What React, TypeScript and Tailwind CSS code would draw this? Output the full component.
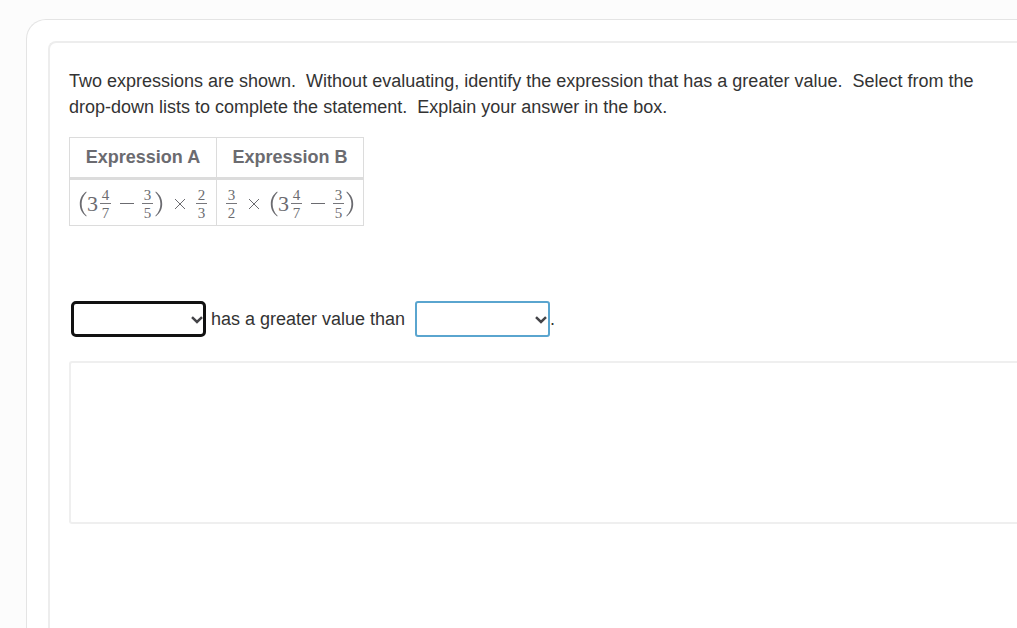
import type { ReactNode } from "react";

function Frac({ top, bottom }: { top: string; bottom: string }) {
  return (
    <span className="inline-flex w-[11px] flex-col items-center text-[15px]">
      <span className="w-full border-b border-[#77777c] pt-[3px] text-center leading-[15px]">{top}</span>
      <span className="leading-[18px]">{bottom}</span>
    </span>
  );
}

function Paren({ side }: { side: "left" | "right" }) {
  return (
    <svg
      role="img"
      aria-label={side === "left" ? "(" : ")"}
      viewBox="0 0 8 26"
      className={side === "left" ? "h-[26px] w-2" : "h-[26px] w-2 -scale-x-100"}
      fill="#6b6b70"
    >
      <path d="M7.2 0.6C2.8 4 0.8 8 0.8 13s2 9 6.4 12.4l0.4-0.6C4.2 21.400 2.600 17.500 2.600 13S4.200 4.600 7.600 1.200z" />
    </svg>
  );
}

function Minus() {
  return (
    <svg role="img" aria-label="minus" viewBox="0 0 14 14" className="mr-2 ml-[9px] size-[14px]" stroke="#6b6b70">
      <path d="M0 6.500H14" />
    </svg>
  );
}

function Times() {
  return (
    <svg role="img" aria-label="times" viewBox="0 0 12 12" className="size-3" stroke="#6b6b70" strokeWidth="1">
      <path d="M1 1L11 11M11 1L1 11" />
    </svg>
  );
}

function Difference() {
  return (
    <span className="flex items-center">
      <Paren side="left" />
      <span className="mr-[2px] text-[22px] leading-6">3</span>
      <Frac top="4" bottom="7" />
      <Minus />
      <Frac top="3" bottom="5" />
      <span className="ml-[2px] flex">
        <Paren side="right" />
      </span>
    </span>
  );
}

function Expression({ children }: { children: ReactNode }) {
  return (
    <td className="border border-[#dcdcdc] pt-[5px] pr-[9px] pb-[3px] pl-[9px]">
      <div className="flex items-center justify-between font-['Liberation_Serif',serif] text-[#6b6b70]">
        {children}
      </div>
    </td>
  );
}

function Choice({ label, active = false }: { label: string; active?: boolean }) {
  return (
    <span className="relative inline-flex">
      <select
        aria-label={label}
        defaultValue=""
        className={
          active
            ? "h-9 w-[135px] appearance-none rounded-[5px] border-[3px] border-[#111111] bg-white px-2 outline-none"
            : "h-9 w-[135px] appearance-none rounded-[3px] border-2 border-[#5aa5cf] bg-white px-2 outline-none"
        }
      >
        <option value=""></option>
        <option value="a">Expression A</option>
        <option value="b">Expression B</option>
      </select>
      <svg
        aria-hidden="true"
        viewBox="0 0 12 8"
        className="pointer-events-none absolute top-[15px] right-[3px] h-2 w-3"
        fill="none"
        stroke="#444448"
        strokeWidth="2.500"
      >
        <path d="M1 1.200L6 6L11 1.200" />
      </svg>
    </span>
  );
}

export default function App() {
  return (
    <div className="flex min-h-screen bg-[#fcfcfc] pt-[19px] pl-[26px] font-['Liberation_Sans',sans-serif] text-lg leading-[26px] text-[#333333]">
      <div className="flex grow rounded-tl-[20px] border-t border-l border-[#e4e4e4] bg-white pt-[21px] pl-[21px]">
        <main className="grow rounded-tl-lg border-t-2 border-l-2 border-[#ededed] pt-[25px] pl-[19px]">
          <p className="pr-5">
            Two expressions are shown.&nbsp; Without evaluating, identify the expression that has a greater value.&nbsp;
            Select from the drop-down lists to complete the statement.&nbsp; Explain your answer in the box.
          </p>

          <table className="mt-[17px] w-[295px] table-fixed border-collapse text-[#6b6b70]">
            <thead>
              <tr>
                <th className="h-[41px] border border-b-[3px] border-[#dcdcdc] pb-px font-bold">Expression A</th>
                <th className="h-[41px] border border-b-[3px] border-[#dcdcdc] pb-px font-bold">Expression B</th>
              </tr>
            </thead>
            <tbody>
              <tr>
                <Expression>
                  <Difference />
                  <Times />
                  <Frac top="2" bottom="3" />
                </Expression>
                <Expression>
                  <Frac top="3" bottom="2" />
                  <Times />
                  <Difference />
                </Expression>
              </tr>
            </tbody>
          </table>

          <div className="mt-[75px] flex items-center pl-[2px]">
            <Choice label="Expression with the greater value" active />
            <span className="ml-[5px] w-[204px]">has a greater value than</span>
            <Choice label="Expression with the lesser value" />
            <span>.</span>
          </div>

          <textarea
            aria-label="Explain your answer"
            className="mt-6 block h-[163px] w-full resize-none rounded-l-[3px] border-2 border-r-0 border-[#efefef] p-2 outline-none"
          />
        </main>
      </div>
    </div>
  );
}
